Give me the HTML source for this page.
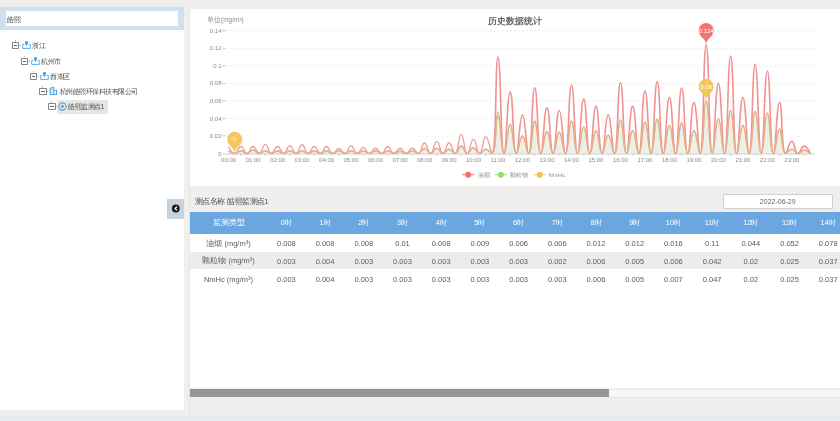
<!DOCTYPE html>
<html><head><meta charset="utf-8"><style>
*{margin:0;padding:0;box-sizing:border-box}
html,body{width:840px;height:421px;overflow:hidden;}body{will-change:transform;background:#efeeec;font-family:"Liberation Sans", sans-serif}
.abs{position:absolute}
#left{position:absolute;left:0;top:7px;width:184px;height:402.8px;background:#fff}
#search{position:absolute;left:0;top:0;width:184px;height:22.5px;background:#d1e0ee}
#inp{position:absolute;left:5.8px;top:4.4px;width:172.7px;height:14.5px;background:#fff;font-size:6.5px;color:#3a3a3a;padding:4.2px 0 0 1.2px;line-height:7px}
.box{position:absolute;width:7.6px;height:7.2px;border:0.9px solid #858585;border-radius:0.8px}
.box:after{content:"";position:absolute;left:1px;right:1px;top:2.4px;height:0.8px;background:#666}
.ico{position:absolute;width:9px;height:9px}.ico svg{display:block}
.tt{position:absolute;font-size:7px;letter-spacing:-0.5px;line-height:9px;color:#4a4a4a;white-space:nowrap}
.sel{position:absolute;background:#e6e6e6}
#strip{position:absolute;left:184px;top:8px;width:6px;height:408px;background:#efefee;border-right:0.8px solid #e5e5e5}
#chart{position:absolute;left:190px;top:9px;width:650px;height:176.7px;background:#fff}
#bottom{position:absolute;left:190px;top:185.7px;width:650px;height:229.8px;background:#f0efed}
#pname{position:absolute;left:4.5px;top:11px;font-size:7px;transform:scale(1.07);transform-origin:0 center;line-height:9px;color:#484848;white-space:nowrap}
#date{position:absolute;left:532.5px;top:8.6px;width:110.5px;height:14.4px;padding-top:0.6px;background:#fff;border:1px solid #cfcfcf;font-size:7px;color:#666;text-align:center;line-height:12px}
#tw{position:absolute;left:0;top:26px;width:650px;height:176.6px;background:#fff;overflow:hidden}
table{border-collapse:collapse;table-layout:fixed;width:1006px;font-size:7.5px;color:#5c5c5c}td{padding-top:1.2px}th{padding-top:1px;font-size:7.4px}
td,th{width:38.7px;text-align:center;font-weight:normal;white-space:nowrap;overflow:visible}
td.c0,th.c0{width:77px}
tr.hd{background:#6aa7e0;height:22.3px;color:#fff}tr.hd th.c0{font-size:7.6px}
tr.r1{background:#fff;height:18px}
tr.r2{background:#ececec;height:17.5px}
#thumb{position:absolute;left:0;top:203.1px;width:419px;height:7.9px;background:#979797}
#track{position:absolute;left:419px;top:203.1px;width:231px;height:8.9px;background:#f7f7f7;border-top:0.6px solid #ededed;border-bottom:0.8px solid #e6e6e6}
#foot{position:absolute;left:0;top:415.7px;width:840px;height:6px;background:#e8ecef;border-top:0.6px solid #e2e6ea}
#tog{position:absolute;left:167px;top:199px;width:17px;height:19.7px;background:#c7d2dd}
svg#ch{position:absolute;left:0;top:0}
</style></head><body>
<div id="left"><div id="search"><div id="inp">皓熙</div></div>
<div class="abs" style="left:0;top:-7px;width:184px;height:421px"><div class="box" style="left:11.5px;top:42.0px"></div><div class="abs" style="left:14.8px;top:40.3px;width:0.8px;height:1.6px;background:#bbb"></div><div class="abs" style="left:19.3px;top:45.2px;width:1.6px;height:0.8px;background:#bbb"></div><div class="ico" style="left:21.5px;top:41.0px"><svg width="9" height="8" viewBox="0 0 9 8"><path d="M2.2 3.5 H0.7 V7.4 H8.3 V3.5 H6.8" fill="none" stroke="#4aa6e8" stroke-width="0.9"/><path d="M4.5 0.1 c1 0 1.7 0.7 1.7 1.7 c0 1.1 -1.7 3.3 -1.7 3.3 c0 0 -1.7 -2.2 -1.7 -3.3 c0 -1 0.7 -1.7 1.7 -1.7z" fill="#4aa6e8"/></svg></div><div class="tt" style="left:32.0px;top:41.0px">浙江</div><div class="box" style="left:20.5px;top:57.5px"></div><div class="abs" style="left:23.8px;top:55.8px;width:0.8px;height:1.6px;background:#bbb"></div><div class="abs" style="left:28.3px;top:60.7px;width:1.6px;height:0.8px;background:#bbb"></div><div class="ico" style="left:30.5px;top:56.5px"><svg width="9" height="8" viewBox="0 0 9 8"><path d="M2.2 3.5 H0.7 V7.4 H8.3 V3.5 H6.8" fill="none" stroke="#4aa6e8" stroke-width="0.9"/><path d="M4.5 0.1 c1 0 1.7 0.7 1.7 1.7 c0 1.1 -1.7 3.3 -1.7 3.3 c0 0 -1.7 -2.2 -1.7 -3.3 c0 -1 0.7 -1.7 1.7 -1.7z" fill="#4aa6e8"/></svg></div><div class="tt" style="left:41.0px;top:56.5px">杭州市</div><div class="box" style="left:29.7px;top:72.5px"></div><div class="abs" style="left:33.0px;top:70.8px;width:0.8px;height:1.6px;background:#bbb"></div><div class="abs" style="left:37.5px;top:75.7px;width:1.6px;height:0.8px;background:#bbb"></div><div class="ico" style="left:39.7px;top:71.5px"><svg width="9" height="8" viewBox="0 0 9 8"><path d="M2.2 3.5 H0.7 V7.4 H8.3 V3.5 H6.8" fill="none" stroke="#4aa6e8" stroke-width="0.9"/><path d="M4.5 0.1 c1 0 1.7 0.7 1.7 1.7 c0 1.1 -1.7 3.3 -1.7 3.3 c0 0 -1.7 -2.2 -1.7 -3.3 c0 -1 0.7 -1.7 1.7 -1.7z" fill="#4aa6e8"/></svg></div><div class="tt" style="left:50.2px;top:71.5px">西湖区</div><div class="box" style="left:39.0px;top:87.8px"></div><div class="abs" style="left:42.3px;top:86.1px;width:0.8px;height:1.6px;background:#bbb"></div><div class="abs" style="left:46.8px;top:91.0px;width:1.6px;height:0.8px;background:#bbb"></div><div class="ico" style="left:49.0px;top:86.8px"><svg width="9" height="8" viewBox="0 0 9 8"><path d="M1.2 7.6 V1.2 L4.8 0.4 V7.6 Z" fill="none" stroke="#45a6e6" stroke-width="1.1"/><path d="M4.8 3.2 H7.6 V7.6 H4.8" fill="none" stroke="#45a6e6" stroke-width="1.1"/><path d="M2.4 2.5 h1.2 M2.4 4 h1.2 M2.4 5.5 h1.2" stroke="#45a6e6" stroke-width="0.7"/></svg></div><div class="tt" style="left:59.5px;top:86.8px">杭州皓熙环保科技有限公司</div><div class="box" style="left:48.0px;top:102.8px"></div><div class="abs" style="left:51.3px;top:101.1px;width:0.8px;height:1.6px;background:#bbb"></div><div class="abs" style="left:55.8px;top:106.0px;width:1.6px;height:0.8px;background:#bbb"></div><div class="sel" style="left:56.5px;top:100.0px;width:51.5px;height:14.3px"></div><div class="ico" style="left:58.0px;top:101.8px"><svg width="9" height="9" viewBox="0 0 9 9"><circle cx="4.5" cy="4.5" r="3.6" fill="none" stroke="#45a6e6" stroke-width="1.1"/><circle cx="4.5" cy="4.5" r="1.4" fill="#45a6e6"/></svg></div><div class="tt" style="left:68.0px;top:101.8px">皓熙监测点1</div></div>
</div>
<div id="strip"></div>
<div id="chart"></div>
<div id="bottom"><div id="pname">测点名称 皓熙监测点1</div><div id="date">2022-06-29</div>
<div id="tw"><table><tr class="hd"><th class="c0">监测类型</th><th>0时</th><th>1时</th><th>2时</th><th>3时</th><th>4时</th><th>5时</th><th>6时</th><th>7时</th><th>8时</th><th>9时</th><th>10时</th><th>11时</th><th>12时</th><th>13时</th><th>14时</th><th>15时</th><th>16时</th><th>17时</th><th>18时</th><th>19时</th><th>20时</th><th>21时</th><th>22时</th><th>23时</th></tr><tr class="r1"><td class="c0">油烟 (mg/m³)</td><td>0.008</td><td>0.008</td><td>0.008</td><td>0.01</td><td>0.008</td><td>0.009</td><td>0.006</td><td>0.006</td><td>0.012</td><td>0.012</td><td>0.016</td><td>0.11</td><td>0.044</td><td>0.052</td><td>0.078</td><td>0.081</td><td>0.0715</td><td>0.064</td><td>0.058</td><td>0.08</td><td>0.064</td><td>0.094</td><td>0.058</td><td>0.014</td></tr><tr class="r2"><td class="c0">颗粒物 (mg/m³)</td><td>0.003</td><td>0.004</td><td>0.003</td><td>0.003</td><td>0.003</td><td>0.003</td><td>0.003</td><td>0.002</td><td>0.006</td><td>0.005</td><td>0.006</td><td>0.042</td><td>0.02</td><td>0.025</td><td>0.037</td><td>0.026</td><td>0.036</td><td>0.032</td><td>0.026</td><td>0.04</td><td>0.032</td><td>0.046</td><td>0.028</td><td>0.005</td></tr><tr class="r1"><td class="c0">NmHc (mg/m³)</td><td>0.003</td><td>0.004</td><td>0.003</td><td>0.003</td><td>0.003</td><td>0.003</td><td>0.003</td><td>0.003</td><td>0.006</td><td>0.005</td><td>0.007</td><td>0.047</td><td>0.02</td><td>0.025</td><td>0.037</td><td>0.026</td><td>0.036</td><td>0.032</td><td>0.026</td><td>0.04</td><td>0.032</td><td>0.046</td><td>0.028</td><td>0.005</td></tr></table></div>
<div id="thumb"></div><div id="track"></div>
</div>
<div id="foot"></div>
<div id="tog"><svg width="17" height="20" viewBox="0 0 17 20"><circle cx="8.8" cy="9.5" r="3.9" fill="#1b1b1b"/><path d="M9.9 7.7 L8 9.5 L9.9 11.3" fill="none" stroke="#fff" stroke-width="1.2"/></svg></div>
<svg id="ch" width="840" height="421" viewBox="0 0 840 421" font-family='"Liberation Sans", sans-serif'>
<text x="514.7" y="24" text-anchor="middle" font-size="9" font-weight="bold" fill="#666">历史数据统计</text>
<text x="207" y="21.5" font-size="6.5" fill="#8a8a8a">单位(mg/m³)</text>
<text x="221.5" y="155.60" text-anchor="end" font-size="6" fill="#8a8a8a">0</text>
<text x="221.5" y="138.06" text-anchor="end" font-size="6" fill="#8a8a8a">0.02</text>
<line x1="226" y1="135.96" x2="815.5" y2="135.96" stroke="#e6e6e6" stroke-width="1" stroke-dasharray="1.5 2.5"/>
<line x1="222" y1="135.96" x2="225.5" y2="135.96" stroke="#b8b8b8" stroke-width="0.8"/>
<text x="221.5" y="120.52" text-anchor="end" font-size="6" fill="#8a8a8a">0.04</text>
<line x1="226" y1="118.42" x2="815.5" y2="118.42" stroke="#e6e6e6" stroke-width="1" stroke-dasharray="1.5 2.5"/>
<line x1="222" y1="118.42" x2="225.5" y2="118.42" stroke="#b8b8b8" stroke-width="0.8"/>
<text x="221.5" y="102.98" text-anchor="end" font-size="6" fill="#8a8a8a">0.06</text>
<line x1="226" y1="100.88" x2="815.5" y2="100.88" stroke="#e6e6e6" stroke-width="1" stroke-dasharray="1.5 2.5"/>
<line x1="222" y1="100.88" x2="225.5" y2="100.88" stroke="#b8b8b8" stroke-width="0.8"/>
<text x="221.5" y="85.44" text-anchor="end" font-size="6" fill="#8a8a8a">0.08</text>
<line x1="226" y1="83.34" x2="815.5" y2="83.34" stroke="#e6e6e6" stroke-width="1" stroke-dasharray="1.5 2.5"/>
<line x1="222" y1="83.34" x2="225.5" y2="83.34" stroke="#b8b8b8" stroke-width="0.8"/>
<text x="221.5" y="67.90" text-anchor="end" font-size="6" fill="#8a8a8a">0.1</text>
<line x1="226" y1="65.80" x2="815.5" y2="65.80" stroke="#e6e6e6" stroke-width="1" stroke-dasharray="1.5 2.5"/>
<line x1="222" y1="65.80" x2="225.5" y2="65.80" stroke="#b8b8b8" stroke-width="0.8"/>
<text x="221.5" y="50.36" text-anchor="end" font-size="6" fill="#8a8a8a">0.12</text>
<line x1="226" y1="48.26" x2="815.5" y2="48.26" stroke="#e6e6e6" stroke-width="1" stroke-dasharray="1.5 2.5"/>
<line x1="222" y1="48.26" x2="225.5" y2="48.26" stroke="#b8b8b8" stroke-width="0.8"/>
<text x="221.5" y="32.82" text-anchor="end" font-size="6" fill="#8a8a8a">0.14</text>
<line x1="226" y1="30.72" x2="815.5" y2="30.72" stroke="#e6e6e6" stroke-width="1" stroke-dasharray="1.5 2.5"/>
<line x1="222" y1="30.72" x2="225.5" y2="30.72" stroke="#b8b8b8" stroke-width="0.8"/>
<text x="228.60" y="162.2" text-anchor="middle" font-size="6" fill="#8a8a8a">00:00</text>
<text x="253.09" y="162.2" text-anchor="middle" font-size="6" fill="#8a8a8a">01:00</text>
<text x="277.58" y="162.2" text-anchor="middle" font-size="6" fill="#8a8a8a">02:00</text>
<text x="302.07" y="162.2" text-anchor="middle" font-size="6" fill="#8a8a8a">03:00</text>
<text x="326.56" y="162.2" text-anchor="middle" font-size="6" fill="#8a8a8a">04:00</text>
<text x="351.05" y="162.2" text-anchor="middle" font-size="6" fill="#8a8a8a">05:00</text>
<text x="375.54" y="162.2" text-anchor="middle" font-size="6" fill="#8a8a8a">06:00</text>
<text x="400.03" y="162.2" text-anchor="middle" font-size="6" fill="#8a8a8a">07:00</text>
<text x="424.52" y="162.2" text-anchor="middle" font-size="6" fill="#8a8a8a">08:00</text>
<text x="449.01" y="162.2" text-anchor="middle" font-size="6" fill="#8a8a8a">09:00</text>
<text x="473.50" y="162.2" text-anchor="middle" font-size="6" fill="#8a8a8a">10:00</text>
<text x="497.99" y="162.2" text-anchor="middle" font-size="6" fill="#8a8a8a">11:00</text>
<text x="522.48" y="162.2" text-anchor="middle" font-size="6" fill="#8a8a8a">12:00</text>
<text x="546.97" y="162.2" text-anchor="middle" font-size="6" fill="#8a8a8a">13:00</text>
<text x="571.46" y="162.2" text-anchor="middle" font-size="6" fill="#8a8a8a">14:00</text>
<text x="595.95" y="162.2" text-anchor="middle" font-size="6" fill="#8a8a8a">15:00</text>
<text x="620.44" y="162.2" text-anchor="middle" font-size="6" fill="#8a8a8a">16:00</text>
<text x="644.93" y="162.2" text-anchor="middle" font-size="6" fill="#8a8a8a">17:00</text>
<text x="669.42" y="162.2" text-anchor="middle" font-size="6" fill="#8a8a8a">18:00</text>
<text x="693.91" y="162.2" text-anchor="middle" font-size="6" fill="#8a8a8a">19:00</text>
<text x="718.40" y="162.2" text-anchor="middle" font-size="6" fill="#8a8a8a">20:00</text>
<text x="742.89" y="162.2" text-anchor="middle" font-size="6" fill="#8a8a8a">21:00</text>
<text x="767.38" y="162.2" text-anchor="middle" font-size="6" fill="#8a8a8a">22:00</text>
<text x="791.87" y="162.2" text-anchor="middle" font-size="6" fill="#8a8a8a">23:00</text>
<line x1="240.84" y1="153.5" x2="240.84" y2="156" stroke="#c8c8c8" stroke-width="0.8"/>
<line x1="265.33" y1="153.5" x2="265.33" y2="156" stroke="#c8c8c8" stroke-width="0.8"/>
<line x1="289.82" y1="153.5" x2="289.82" y2="156" stroke="#c8c8c8" stroke-width="0.8"/>
<line x1="314.31" y1="153.5" x2="314.31" y2="156" stroke="#c8c8c8" stroke-width="0.8"/>
<line x1="338.81" y1="153.5" x2="338.81" y2="156" stroke="#c8c8c8" stroke-width="0.8"/>
<line x1="363.29" y1="153.5" x2="363.29" y2="156" stroke="#c8c8c8" stroke-width="0.8"/>
<line x1="387.78" y1="153.5" x2="387.78" y2="156" stroke="#c8c8c8" stroke-width="0.8"/>
<line x1="412.27" y1="153.5" x2="412.27" y2="156" stroke="#c8c8c8" stroke-width="0.8"/>
<line x1="436.76" y1="153.5" x2="436.76" y2="156" stroke="#c8c8c8" stroke-width="0.8"/>
<line x1="461.25" y1="153.5" x2="461.25" y2="156" stroke="#c8c8c8" stroke-width="0.8"/>
<line x1="485.75" y1="153.5" x2="485.75" y2="156" stroke="#c8c8c8" stroke-width="0.8"/>
<line x1="510.24" y1="153.5" x2="510.24" y2="156" stroke="#c8c8c8" stroke-width="0.8"/>
<line x1="534.73" y1="153.5" x2="534.73" y2="156" stroke="#c8c8c8" stroke-width="0.8"/>
<line x1="559.21" y1="153.5" x2="559.21" y2="156" stroke="#c8c8c8" stroke-width="0.8"/>
<line x1="583.70" y1="153.5" x2="583.70" y2="156" stroke="#c8c8c8" stroke-width="0.8"/>
<line x1="608.19" y1="153.5" x2="608.19" y2="156" stroke="#c8c8c8" stroke-width="0.8"/>
<line x1="632.68" y1="153.5" x2="632.68" y2="156" stroke="#c8c8c8" stroke-width="0.8"/>
<line x1="657.17" y1="153.5" x2="657.17" y2="156" stroke="#c8c8c8" stroke-width="0.8"/>
<line x1="681.66" y1="153.5" x2="681.66" y2="156" stroke="#c8c8c8" stroke-width="0.8"/>
<line x1="706.15" y1="153.5" x2="706.15" y2="156" stroke="#c8c8c8" stroke-width="0.8"/>
<line x1="730.64" y1="153.5" x2="730.64" y2="156" stroke="#c8c8c8" stroke-width="0.8"/>
<line x1="755.13" y1="153.5" x2="755.13" y2="156" stroke="#c8c8c8" stroke-width="0.8"/>
<line x1="779.62" y1="153.5" x2="779.62" y2="156" stroke="#c8c8c8" stroke-width="0.8"/>
<line x1="804.12" y1="153.5" x2="804.12" y2="156" stroke="#c8c8c8" stroke-width="0.8"/>
<path d="M228.60 150.87 C228.60 150.87 231.66 153.50 234.72 153.50 C237.78 153.50 237.78 150.87 240.84 150.87 C243.91 150.87 243.99 153.50 246.97 153.50 C250.12 153.50 250.03 149.99 253.09 149.99 C256.15 149.99 256.06 153.50 259.21 153.50 C262.19 153.50 262.27 150.87 265.33 150.87 C268.40 150.87 268.40 153.50 271.46 153.50 C274.52 153.50 274.52 150.87 277.58 150.87 C280.64 150.87 280.64 153.50 283.70 153.50 C286.76 153.50 286.76 150.87 289.82 150.87 C292.89 150.87 292.89 153.50 295.95 153.50 C299.01 153.50 299.01 150.87 302.07 150.87 C305.13 150.87 305.13 153.50 308.19 153.50 C311.25 153.50 311.25 150.87 314.31 150.87 C317.38 150.87 317.38 153.50 320.44 153.50 C323.50 153.50 323.50 150.87 326.56 150.87 C329.62 150.87 329.62 153.50 332.68 153.50 C335.74 153.50 335.74 150.87 338.81 150.87 C341.87 150.87 341.87 153.50 344.93 153.50 C347.99 153.50 347.99 150.87 351.05 150.87 C354.11 150.87 354.11 153.50 357.17 153.50 C360.23 153.50 360.23 150.87 363.29 150.87 C366.36 150.87 366.36 153.50 369.42 153.50 C372.48 153.50 372.48 150.87 375.54 150.87 C378.60 150.87 378.60 153.50 381.66 153.50 C384.72 153.50 384.72 150.87 387.78 150.87 C390.85 150.87 390.85 153.50 393.91 153.50 C396.97 153.50 396.97 150.87 400.03 150.87 C403.09 150.87 403.09 153.50 406.15 153.50 C409.21 153.50 409.21 150.87 412.27 150.87 C415.34 150.87 415.63 153.50 418.40 153.50 C421.75 153.50 421.46 148.24 424.52 148.24 C427.58 148.24 427.58 153.50 430.64 153.50 C433.70 153.50 433.70 148.24 436.76 148.24 C439.83 148.24 439.72 153.50 442.89 153.50 C445.84 153.50 445.95 149.12 449.01 149.12 C452.07 149.12 452.46 153.50 455.13 153.50 C458.58 153.50 458.19 145.96 461.25 145.96 C464.32 145.96 464.14 153.50 467.38 153.50 C470.26 153.50 470.44 147.36 473.50 147.36 C476.56 147.36 476.35 153.50 479.62 153.50 C482.47 153.50 482.68 149.12 485.75 149.12 C488.81 149.12 490.93 153.50 491.87 153.50 C497.05 153.50 494.93 112.28 497.99 112.28 C501.05 112.28 500.53 153.50 504.11 153.50 C506.65 153.50 507.17 124.56 510.24 124.56 C513.30 124.56 512.60 153.50 516.36 153.50 C518.72 153.50 519.42 135.96 522.48 135.96 C525.54 135.96 526.40 153.50 528.60 153.50 C532.52 153.50 531.66 121.05 534.73 121.05 C537.79 121.05 537.22 153.50 540.85 153.50 C543.35 153.50 543.91 131.57 546.97 131.57 C550.03 131.57 550.00 153.50 553.09 153.50 C556.13 153.50 556.15 132.01 559.21 132.01 C562.28 132.01 562.87 153.50 565.34 153.50 C568.99 153.50 568.40 121.05 571.46 121.05 C574.52 121.05 574.21 153.50 577.58 153.50 C580.34 153.50 580.64 127.19 583.70 127.19 C586.77 127.19 586.56 153.50 589.83 153.50 C592.68 153.50 592.89 130.70 595.95 130.70 C599.01 130.70 598.71 153.50 602.07 153.50 C604.83 153.50 605.13 135.08 608.19 135.08 C611.26 135.08 612.09 153.50 614.32 153.50 C618.21 153.50 617.38 120.17 620.44 120.17 C623.50 120.17 622.95 153.50 626.56 153.50 C629.08 153.50 629.62 130.70 632.68 130.70 C635.75 130.70 636.22 153.50 638.81 153.50 C642.34 153.50 641.87 121.93 644.93 121.93 C647.99 121.93 648.11 153.50 651.05 153.50 C654.23 153.50 654.11 119.30 657.17 119.30 C660.24 119.30 659.95 153.50 663.30 153.50 C666.07 153.50 666.36 125.44 669.42 125.44 C672.48 125.44 672.61 153.50 675.54 153.50 C678.74 153.50 678.60 122.80 681.66 122.80 C684.73 122.80 684.30 153.50 687.79 153.50 C690.42 153.50 690.85 130.70 693.91 130.70 C696.97 130.70 698.15 153.50 700.03 153.50 C704.27 153.50 703.09 100.88 706.15 100.88 C709.22 100.88 708.60 153.50 712.28 153.50 C714.72 153.50 715.34 118.86 718.40 118.86 C721.46 118.86 721.78 153.50 724.52 153.50 C727.90 153.50 727.58 110.53 730.64 110.53 C733.71 110.53 733.08 153.50 736.77 153.50 C739.21 153.50 739.83 125.44 742.89 125.44 C745.95 125.44 746.54 153.50 749.01 153.50 C752.67 153.50 752.07 111.40 755.13 111.40 C758.20 111.40 758.13 153.50 761.26 153.50 C764.26 153.50 764.32 113.16 767.38 113.16 C770.44 113.16 769.72 153.50 773.50 153.50 C775.85 153.50 776.56 128.94 779.62 128.94 C782.69 128.94 781.03 153.50 785.75 153.50 C787.15 153.50 788.81 149.12 791.87 149.12 C794.93 149.12 794.83 153.50 797.99 153.50 C800.95 153.50 801.05 149.99 804.12 149.99 C807.18 149.99 810.24 153.50 810.24 153.50 L810.24 153.50 L228.60 153.50 Z" fill="#edefe9" stroke="none"/>
<line x1="223" y1="154" x2="814" y2="154" stroke="#cccccc" stroke-width="1"/>
<defs><clipPath id="ca"><rect x="0" y="0" width="491.87" height="421"/></clipPath><clipPath id="cb"><rect x="491.87" y="0" width="840" height="421"/></clipPath></defs>
<path d="M228.60 146.48 C228.60 146.48 231.66 153.50 234.72 153.50 C237.78 153.50 237.78 146.48 240.84 146.48 C243.91 146.48 243.91 153.50 246.97 153.50 C250.03 153.50 250.03 146.48 253.09 146.48 C256.15 146.48 256.40 153.50 259.21 153.50 C262.53 153.50 262.27 144.38 265.33 144.38 C268.40 144.38 268.14 153.50 271.46 153.50 C274.27 153.50 274.52 146.48 277.58 146.48 C280.64 146.48 280.71 153.50 283.70 153.50 C286.83 153.50 286.76 145.96 289.82 145.96 C292.89 145.96 293.03 153.50 295.95 153.50 C299.16 153.50 299.01 144.73 302.07 144.73 C305.13 144.73 304.92 153.50 308.19 153.50 C311.04 153.50 311.25 146.48 314.31 146.48 C317.38 146.48 317.38 153.50 320.44 153.50 C323.50 153.50 323.50 146.48 326.56 146.48 C329.62 146.48 329.37 153.50 332.68 153.50 C335.49 153.50 335.74 148.50 338.81 148.50 C341.87 148.50 342.22 153.50 344.93 153.50 C348.35 153.50 347.99 145.61 351.05 145.61 C354.11 145.61 353.88 153.50 357.17 153.50 C360.01 153.50 360.23 147.45 363.29 147.45 C366.36 147.45 366.26 153.50 369.42 153.50 C372.38 153.50 372.48 148.24 375.54 148.24 C378.60 148.24 378.82 153.50 381.66 153.50 C384.94 153.50 384.72 146.48 387.78 146.48 C390.85 146.48 390.63 153.50 393.91 153.50 C396.75 153.50 396.97 148.24 400.03 148.24 C403.09 148.24 403.09 153.50 406.15 153.50 C409.21 153.50 409.21 148.24 412.27 148.24 C415.34 148.24 415.96 153.50 418.40 153.50 C422.08 153.50 421.46 142.98 424.52 142.98 C427.58 142.98 427.73 153.50 430.64 153.50 C433.85 153.50 433.70 141.57 436.76 141.57 C439.83 141.57 439.68 153.50 442.89 153.50 C445.80 153.50 445.95 142.98 449.01 142.98 C452.07 142.98 452.82 153.50 455.13 153.50 C458.94 153.50 458.19 134.47 461.25 134.47 C464.32 134.47 463.91 153.50 467.38 153.50 C470.03 153.50 470.44 139.47 473.50 139.47 C476.56 139.47 476.79 153.50 479.62 153.50 C482.91 153.50 482.68 136.84 485.75 136.84 C488.81 136.84 490.92 153.50 491.87 153.50 C497.04 153.50 494.93 57.03 497.99 57.03 C501.05 57.03 500.38 153.50 504.11 153.50 C506.50 153.50 507.17 92.11 510.24 92.11 C513.30 92.11 512.61 153.50 516.36 153.50 C518.73 153.50 519.42 114.91 522.48 114.91 C525.54 114.91 526.33 153.50 528.60 153.50 C532.45 153.50 531.66 87.73 534.73 87.73 C537.79 87.73 537.24 153.50 540.85 153.50 C543.36 153.50 543.91 107.90 546.97 107.90 C550.03 107.90 549.94 153.50 553.09 153.50 C556.06 153.50 556.15 110.53 559.21 110.53 C562.28 110.53 562.97 153.50 565.34 153.50 C569.09 153.50 568.40 85.09 571.46 85.09 C574.52 85.09 574.17 153.50 577.58 153.50 C580.30 153.50 580.64 99.13 583.70 99.13 C586.77 99.13 586.56 153.50 589.83 153.50 C592.68 153.50 592.89 106.14 595.95 106.14 C599.01 106.14 598.71 153.50 602.07 153.50 C604.83 153.50 605.13 114.91 608.19 114.91 C611.26 114.91 612.15 153.50 614.32 153.50 C618.27 153.50 617.38 82.46 620.44 82.46 C623.50 82.46 622.90 153.50 626.56 153.50 C629.02 153.50 629.62 106.14 632.68 106.14 C635.75 106.14 636.17 153.50 638.81 153.50 C642.29 153.50 641.87 90.79 644.93 90.79 C647.99 90.79 648.20 153.50 651.05 153.50 C654.32 153.50 654.11 81.59 657.17 81.59 C660.24 81.59 659.86 153.50 663.30 153.50 C665.98 153.50 666.36 97.37 669.42 97.37 C672.48 97.37 672.71 153.50 675.54 153.50 C678.83 153.50 678.60 88.16 681.66 88.16 C684.73 88.16 684.35 153.50 687.79 153.50 C690.47 153.50 690.85 102.63 693.91 102.63 C696.97 102.63 698.07 153.50 700.03 153.50 C704.20 153.50 703.09 44.75 706.15 44.75 C709.22 44.75 708.56 153.50 712.28 153.50 C714.68 153.50 715.34 83.34 718.40 83.34 C721.46 83.34 721.96 153.50 724.52 153.50 C728.08 153.50 727.58 56.15 730.64 56.15 C733.71 56.15 732.89 153.50 736.77 153.50 C739.01 153.50 739.83 97.37 742.89 97.37 C745.95 97.37 746.65 153.50 749.01 153.50 C752.77 153.50 752.07 64.05 755.13 64.05 C758.20 64.05 758.07 153.50 761.26 153.50 C764.19 153.50 764.32 71.06 767.38 71.06 C770.44 71.06 769.72 153.50 773.50 153.50 C775.85 153.50 776.56 102.63 779.62 102.63 C782.69 102.63 780.91 153.50 785.75 153.50 C787.03 153.50 788.81 141.40 791.87 141.40 C794.93 141.40 794.40 153.50 797.99 153.50 C800.53 153.50 801.05 146.13 804.12 146.13 C807.18 146.13 810.24 153.50 810.24 153.50" fill="none" stroke="#f29a9a" stroke-width="1.3" stroke-linejoin="round" clip-path="url(#ca)"/>
<path d="M228.60 146.48 C228.60 146.48 231.66 153.50 234.72 153.50 C237.78 153.50 237.78 146.48 240.84 146.48 C243.91 146.48 243.91 153.50 246.97 153.50 C250.03 153.50 250.03 146.48 253.09 146.48 C256.15 146.48 256.40 153.50 259.21 153.50 C262.53 153.50 262.27 144.38 265.33 144.38 C268.40 144.38 268.14 153.50 271.46 153.50 C274.27 153.50 274.52 146.48 277.58 146.48 C280.64 146.48 280.71 153.50 283.70 153.50 C286.83 153.50 286.76 145.96 289.82 145.96 C292.89 145.96 293.03 153.50 295.95 153.50 C299.16 153.50 299.01 144.73 302.07 144.73 C305.13 144.73 304.92 153.50 308.19 153.50 C311.04 153.50 311.25 146.48 314.31 146.48 C317.38 146.48 317.38 153.50 320.44 153.50 C323.50 153.50 323.50 146.48 326.56 146.48 C329.62 146.48 329.37 153.50 332.68 153.50 C335.49 153.50 335.74 148.50 338.81 148.50 C341.87 148.50 342.22 153.50 344.93 153.50 C348.35 153.50 347.99 145.61 351.05 145.61 C354.11 145.61 353.88 153.50 357.17 153.50 C360.01 153.50 360.23 147.45 363.29 147.45 C366.36 147.45 366.26 153.50 369.42 153.50 C372.38 153.50 372.48 148.24 375.54 148.24 C378.60 148.24 378.82 153.50 381.66 153.50 C384.94 153.50 384.72 146.48 387.78 146.48 C390.85 146.48 390.63 153.50 393.91 153.50 C396.75 153.50 396.97 148.24 400.03 148.24 C403.09 148.24 403.09 153.50 406.15 153.50 C409.21 153.50 409.21 148.24 412.27 148.24 C415.34 148.24 415.96 153.50 418.40 153.50 C422.08 153.50 421.46 142.98 424.52 142.98 C427.58 142.98 427.73 153.50 430.64 153.50 C433.85 153.50 433.70 141.57 436.76 141.57 C439.83 141.57 439.68 153.50 442.89 153.50 C445.80 153.50 445.95 142.98 449.01 142.98 C452.07 142.98 452.82 153.50 455.13 153.50 C458.94 153.50 458.19 134.47 461.25 134.47 C464.32 134.47 463.91 153.50 467.38 153.50 C470.03 153.50 470.44 139.47 473.50 139.47 C476.56 139.47 476.79 153.50 479.62 153.50 C482.91 153.50 482.68 136.84 485.75 136.84 C488.81 136.84 490.92 153.50 491.87 153.50 C497.04 153.50 494.93 57.03 497.99 57.03 C501.05 57.03 500.38 153.50 504.11 153.50 C506.50 153.50 507.17 92.11 510.24 92.11 C513.30 92.11 512.61 153.50 516.36 153.50 C518.73 153.50 519.42 114.91 522.48 114.91 C525.54 114.91 526.33 153.50 528.60 153.50 C532.45 153.50 531.66 87.73 534.73 87.73 C537.79 87.73 537.24 153.50 540.85 153.50 C543.36 153.50 543.91 107.90 546.97 107.90 C550.03 107.90 549.94 153.50 553.09 153.50 C556.06 153.50 556.15 110.53 559.21 110.53 C562.28 110.53 562.97 153.50 565.34 153.50 C569.09 153.50 568.40 85.09 571.46 85.09 C574.52 85.09 574.17 153.50 577.58 153.50 C580.30 153.50 580.64 99.13 583.70 99.13 C586.77 99.13 586.56 153.50 589.83 153.50 C592.68 153.50 592.89 106.14 595.95 106.14 C599.01 106.14 598.71 153.50 602.07 153.50 C604.83 153.50 605.13 114.91 608.19 114.91 C611.26 114.91 612.15 153.50 614.32 153.50 C618.27 153.50 617.38 82.46 620.44 82.46 C623.50 82.46 622.90 153.50 626.56 153.50 C629.02 153.50 629.62 106.14 632.68 106.14 C635.75 106.14 636.17 153.50 638.81 153.50 C642.29 153.50 641.87 90.79 644.93 90.79 C647.99 90.79 648.20 153.50 651.05 153.50 C654.32 153.50 654.11 81.59 657.17 81.59 C660.24 81.59 659.86 153.50 663.30 153.50 C665.98 153.50 666.36 97.37 669.42 97.37 C672.48 97.37 672.71 153.50 675.54 153.50 C678.83 153.50 678.60 88.16 681.66 88.16 C684.73 88.16 684.35 153.50 687.79 153.50 C690.47 153.50 690.85 102.63 693.91 102.63 C696.97 102.63 698.07 153.50 700.03 153.50 C704.20 153.50 703.09 44.75 706.15 44.75 C709.22 44.75 708.56 153.50 712.28 153.50 C714.68 153.50 715.34 83.34 718.40 83.34 C721.46 83.34 721.96 153.50 724.52 153.50 C728.08 153.50 727.58 56.15 730.64 56.15 C733.71 56.15 732.89 153.50 736.77 153.50 C739.01 153.50 739.83 97.37 742.89 97.37 C745.95 97.37 746.65 153.50 749.01 153.50 C752.77 153.50 752.07 64.05 755.13 64.05 C758.20 64.05 758.07 153.50 761.26 153.50 C764.19 153.50 764.32 71.06 767.38 71.06 C770.44 71.06 769.72 153.50 773.50 153.50 C775.85 153.50 776.56 102.63 779.62 102.63 C782.69 102.63 780.91 153.50 785.75 153.50 C787.03 153.50 788.81 141.40 791.87 141.40 C794.93 141.40 794.40 153.50 797.99 153.50 C800.53 153.50 801.05 146.13 804.12 146.13 C807.18 146.13 810.24 153.50 810.24 153.50" fill="none" stroke="#f29191" stroke-width="1.6" stroke-linejoin="round" clip-path="url(#cb)"/>
<path d="M228.60 150.87 C228.60 150.87 231.66 153.50 234.72 153.50 C237.78 153.50 237.78 150.87 240.84 150.87 C243.91 150.87 243.99 153.50 246.97 153.50 C250.12 153.50 250.03 149.99 253.09 149.99 C256.15 149.99 256.06 153.50 259.21 153.50 C262.19 153.50 262.27 150.87 265.33 150.87 C268.40 150.87 268.40 153.50 271.46 153.50 C274.52 153.50 274.52 150.87 277.58 150.87 C280.64 150.87 280.64 153.50 283.70 153.50 C286.76 153.50 286.76 150.87 289.82 150.87 C292.89 150.87 292.89 153.50 295.95 153.50 C299.01 153.50 299.01 150.87 302.07 150.87 C305.13 150.87 305.13 153.50 308.19 153.50 C311.25 153.50 311.25 150.87 314.31 150.87 C317.38 150.87 317.38 153.50 320.44 153.50 C323.50 153.50 323.50 150.87 326.56 150.87 C329.62 150.87 329.62 153.50 332.68 153.50 C335.74 153.50 335.74 150.87 338.81 150.87 C341.87 150.87 341.87 153.50 344.93 153.50 C347.99 153.50 347.99 150.87 351.05 150.87 C354.11 150.87 354.11 153.50 357.17 153.50 C360.23 153.50 360.23 150.87 363.29 150.87 C366.36 150.87 366.36 153.50 369.42 153.50 C372.48 153.50 372.48 150.87 375.54 150.87 C378.60 150.87 378.60 153.50 381.66 153.50 C384.72 153.50 384.72 150.87 387.78 150.87 C390.85 150.87 390.78 153.50 393.91 153.50 C396.90 153.50 396.97 151.75 400.03 151.75 C403.09 151.75 403.16 153.50 406.15 153.50 C409.28 153.50 409.21 150.87 412.27 150.87 C415.34 150.87 415.63 153.50 418.40 153.50 C421.75 153.50 421.46 148.24 424.52 148.24 C427.58 148.24 427.58 153.50 430.64 153.50 C433.70 153.50 433.70 148.24 436.76 148.24 C439.83 148.24 439.72 153.50 442.89 153.50 C445.84 153.50 445.95 149.12 449.01 149.12 C452.07 149.12 452.46 153.50 455.13 153.50 C458.58 153.50 458.19 145.96 461.25 145.96 C464.32 145.96 464.03 153.50 467.38 153.50 C470.16 153.50 470.44 148.24 473.50 148.24 C476.56 148.24 476.45 153.50 479.62 153.50 C482.58 153.50 482.68 149.12 485.75 149.12 C488.81 149.12 490.84 153.50 491.87 153.50 C496.96 153.50 494.93 116.67 497.99 116.67 C501.05 116.67 500.70 153.50 504.11 153.50 C506.82 153.50 507.17 124.56 510.24 124.56 C513.30 124.56 512.60 153.50 516.36 153.50 C518.72 153.50 519.42 135.96 522.48 135.96 C525.54 135.96 526.40 153.50 528.60 153.50 C532.52 153.50 531.66 121.05 534.73 121.05 C537.79 121.05 537.22 153.50 540.85 153.50 C543.35 153.50 543.91 131.57 546.97 131.57 C550.03 131.57 550.00 153.50 553.09 153.50 C556.13 153.50 556.15 132.01 559.21 132.01 C562.28 132.01 562.87 153.50 565.34 153.50 C568.99 153.50 568.40 121.05 571.46 121.05 C574.52 121.05 574.21 153.50 577.58 153.50 C580.34 153.50 580.64 127.19 583.70 127.19 C586.77 127.19 586.56 153.50 589.83 153.50 C592.68 153.50 592.89 130.70 595.95 130.70 C599.01 130.70 598.71 153.50 602.07 153.50 C604.83 153.50 605.13 135.08 608.19 135.08 C611.26 135.08 612.09 153.50 614.32 153.50 C618.21 153.50 617.38 120.17 620.44 120.17 C623.50 120.17 622.95 153.50 626.56 153.50 C629.08 153.50 629.62 130.70 632.68 130.70 C635.75 130.70 636.22 153.50 638.81 153.50 C642.34 153.50 641.87 121.93 644.93 121.93 C647.99 121.93 648.11 153.50 651.05 153.50 C654.23 153.50 654.11 119.30 657.17 119.30 C660.24 119.30 659.95 153.50 663.30 153.50 C666.07 153.50 666.36 125.44 669.42 125.44 C672.48 125.44 672.61 153.50 675.54 153.50 C678.74 153.50 678.60 122.80 681.66 122.80 C684.73 122.80 684.30 153.50 687.79 153.50 C690.42 153.50 690.85 130.70 693.91 130.70 C696.97 130.70 698.15 153.50 700.03 153.50 C704.27 153.50 703.09 100.88 706.15 100.88 C709.22 100.88 708.60 153.50 712.28 153.50 C714.72 153.50 715.34 118.86 718.40 118.86 C721.46 118.86 721.78 153.50 724.52 153.50 C727.90 153.50 727.58 110.53 730.64 110.53 C733.71 110.53 733.08 153.50 736.77 153.50 C739.21 153.50 739.83 125.44 742.89 125.44 C745.95 125.44 746.54 153.50 749.01 153.50 C752.67 153.50 752.07 111.40 755.13 111.40 C758.20 111.40 758.13 153.50 761.26 153.50 C764.26 153.50 764.32 113.16 767.38 113.16 C770.44 113.16 769.72 153.50 773.50 153.50 C775.85 153.50 776.56 128.94 779.62 128.94 C782.69 128.94 781.03 153.50 785.75 153.50 C787.15 153.50 788.81 149.12 791.87 149.12 C794.93 149.12 794.83 153.50 797.99 153.50 C800.95 153.50 801.05 149.99 804.12 149.99 C807.18 149.99 810.24 153.50 810.24 153.50" fill="none" stroke="#9ad67e" stroke-width="1.2" stroke-linejoin="round"/>
<path d="M228.60 150.87 C228.60 150.87 231.66 153.50 234.72 153.50 C237.78 153.50 237.78 150.87 240.84 150.87 C243.91 150.87 243.99 153.50 246.97 153.50 C250.12 153.50 250.03 149.99 253.09 149.99 C256.15 149.99 256.06 153.50 259.21 153.50 C262.19 153.50 262.27 150.87 265.33 150.87 C268.40 150.87 268.40 153.50 271.46 153.50 C274.52 153.50 274.52 150.87 277.58 150.87 C280.64 150.87 280.64 153.50 283.70 153.50 C286.76 153.50 286.76 150.87 289.82 150.87 C292.89 150.87 292.89 153.50 295.95 153.50 C299.01 153.50 299.01 150.87 302.07 150.87 C305.13 150.87 305.13 153.50 308.19 153.50 C311.25 153.50 311.25 150.87 314.31 150.87 C317.38 150.87 317.38 153.50 320.44 153.50 C323.50 153.50 323.50 150.87 326.56 150.87 C329.62 150.87 329.62 153.50 332.68 153.50 C335.74 153.50 335.74 150.87 338.81 150.87 C341.87 150.87 341.87 153.50 344.93 153.50 C347.99 153.50 347.99 150.87 351.05 150.87 C354.11 150.87 354.11 153.50 357.17 153.50 C360.23 153.50 360.23 150.87 363.29 150.87 C366.36 150.87 366.36 153.50 369.42 153.50 C372.48 153.50 372.48 150.87 375.54 150.87 C378.60 150.87 378.60 153.50 381.66 153.50 C384.72 153.50 384.72 150.87 387.78 150.87 C390.85 150.87 390.85 153.50 393.91 153.50 C396.97 153.50 396.97 150.87 400.03 150.87 C403.09 150.87 403.09 153.50 406.15 153.50 C409.21 153.50 409.21 150.87 412.27 150.87 C415.34 150.87 415.63 153.50 418.40 153.50 C421.75 153.50 421.46 148.24 424.52 148.24 C427.58 148.24 427.58 153.50 430.64 153.50 C433.70 153.50 433.70 148.24 436.76 148.24 C439.83 148.24 439.72 153.50 442.89 153.50 C445.84 153.50 445.95 149.12 449.01 149.12 C452.07 149.12 452.46 153.50 455.13 153.50 C458.58 153.50 458.19 145.96 461.25 145.96 C464.32 145.96 464.14 153.50 467.38 153.50 C470.26 153.50 470.44 147.36 473.50 147.36 C476.56 147.36 476.35 153.50 479.62 153.50 C482.47 153.50 482.68 149.12 485.75 149.12 C488.81 149.12 490.93 153.50 491.87 153.50 C497.05 153.50 494.93 112.28 497.99 112.28 C501.05 112.28 500.53 153.50 504.11 153.50 C506.65 153.50 507.17 124.56 510.24 124.56 C513.30 124.56 512.60 153.50 516.36 153.50 C518.72 153.50 519.42 135.96 522.48 135.96 C525.54 135.96 526.40 153.50 528.60 153.50 C532.52 153.50 531.66 121.05 534.73 121.05 C537.79 121.05 537.22 153.50 540.85 153.50 C543.35 153.50 543.91 131.57 546.97 131.57 C550.03 131.57 550.00 153.50 553.09 153.50 C556.13 153.50 556.15 132.01 559.21 132.01 C562.28 132.01 562.87 153.50 565.34 153.50 C568.99 153.50 568.40 121.05 571.46 121.05 C574.52 121.05 574.21 153.50 577.58 153.50 C580.34 153.50 580.64 127.19 583.70 127.19 C586.77 127.19 586.56 153.50 589.83 153.50 C592.68 153.50 592.89 130.70 595.95 130.70 C599.01 130.70 598.71 153.50 602.07 153.50 C604.83 153.50 605.13 135.08 608.19 135.08 C611.26 135.08 612.09 153.50 614.32 153.50 C618.21 153.50 617.38 120.17 620.44 120.17 C623.50 120.17 622.95 153.50 626.56 153.50 C629.08 153.50 629.62 130.70 632.68 130.70 C635.75 130.70 636.22 153.50 638.81 153.50 C642.34 153.50 641.87 121.93 644.93 121.93 C647.99 121.93 648.11 153.50 651.05 153.50 C654.23 153.50 654.11 119.30 657.17 119.30 C660.24 119.30 659.95 153.50 663.30 153.50 C666.07 153.50 666.36 125.44 669.42 125.44 C672.48 125.44 672.61 153.50 675.54 153.50 C678.74 153.50 678.60 122.80 681.66 122.80 C684.73 122.80 684.30 153.50 687.79 153.50 C690.42 153.50 690.85 130.70 693.91 130.70 C696.97 130.70 698.15 153.50 700.03 153.50 C704.27 153.50 703.09 100.88 706.15 100.88 C709.22 100.88 708.60 153.50 712.28 153.50 C714.72 153.50 715.34 118.86 718.40 118.86 C721.46 118.86 721.78 153.50 724.52 153.50 C727.90 153.50 727.58 110.53 730.64 110.53 C733.71 110.53 733.08 153.50 736.77 153.50 C739.21 153.50 739.83 125.44 742.89 125.44 C745.95 125.44 746.54 153.50 749.01 153.50 C752.67 153.50 752.07 111.40 755.13 111.40 C758.20 111.40 758.13 153.50 761.26 153.50 C764.26 153.50 764.32 113.16 767.38 113.16 C770.44 113.16 769.72 153.50 773.50 153.50 C775.85 153.50 776.56 128.94 779.62 128.94 C782.69 128.94 781.03 153.50 785.75 153.50 C787.15 153.50 788.81 149.12 791.87 149.12 C794.93 149.12 794.83 153.50 797.99 153.50 C800.95 153.50 801.05 149.99 804.12 149.99 C807.18 149.99 810.24 153.50 810.24 153.50" fill="none" stroke="#efab8a" stroke-width="1.4" stroke-linejoin="round"/>
<path d="M699.38 33.68 A7.50 7.50 0 1 1 712.93 33.68 C711.00 37.75 706.15 39.50 706.15 44.75 C706.15 39.50 701.31 37.75 699.38 33.68 Z" fill="#f07474"/>
<text x="706.15" y="32.57" text-anchor="middle" font-size="6" fill="#fff">0.124</text>
<path d="M699.38 89.81 A7.50 7.50 0 1 1 712.93 89.81 C711.00 93.87 706.15 95.63 706.15 100.88 C706.15 95.63 701.31 93.87 699.38 89.81 Z" fill="#f3c660"/>
<text x="706.15" y="88.69" text-anchor="middle" font-size="6" fill="#fff">0.06</text>
<path d="M227.95 142.43 A7.50 7.50 0 1 1 241.50 142.43 C239.57 146.49 234.72 148.25 234.72 153.50 C234.72 148.25 229.87 146.49 227.95 142.43 Z" fill="#f3c660"/>
<text x="234.72" y="141.31" text-anchor="middle" font-size="6" fill="#fff">0</text>
<line x1="462.2" y1="174.7" x2="474.2" y2="174.7" stroke="#f06e6e" stroke-width="1"/>
<circle cx="468.2" cy="174.7" r="3" fill="#f06e6e"/>
<text x="477.5" y="176.9" font-size="6" fill="#909090">油烟</text>
<line x1="494.9" y1="174.7" x2="506.9" y2="174.7" stroke="#8fe06e" stroke-width="1"/>
<circle cx="500.9" cy="174.7" r="3" fill="#8fe06e"/>
<text x="510.0" y="176.9" font-size="6" fill="#909090">颗粒物</text>
<line x1="533.6" y1="174.7" x2="545.6" y2="174.7" stroke="#f4c25a" stroke-width="1"/>
<circle cx="539.6" cy="174.7" r="3" fill="#f4c25a"/>
<text x="548.5" y="176.9" font-size="6" fill="#909090">NmHc</text>
</svg>
</body></html>
